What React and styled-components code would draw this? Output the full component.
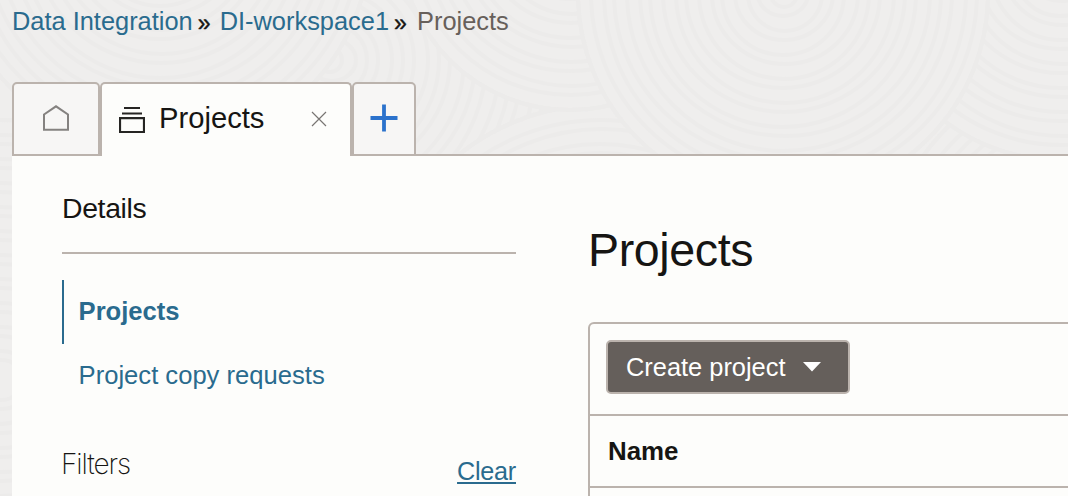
import React from "react";
import styled, { createGlobalStyle } from "styled-components";

const line = "#bbb3ad";
const link = "#2a6b8e";
const ink = "#161513";

const GlobalStyle = createGlobalStyle`
  * { box-sizing: border-box; }
  body {
    margin: 0;
    overflow: hidden;
    background: #efeeed;
    color: ${ink};
    font-family: "Liberation Sans", Arial, sans-serif;
  }
`;

const Page = styled.div`
  position: relative;
  isolation: isolate;
  width: 100vw;
  height: 100vh;
  overflow: hidden;
  display: flex;
  flex-direction: column;
  padding-left: 12px;
`;

const Pattern = styled.svg`
  position: absolute;
  inset: 0;
  z-index: -1;
  width: 1068px;
  height: 496px;
`;

const Breadcrumb = styled.nav`
  display: flex;
  flex: none;
  height: 82px;
  padding-top: 1px;
  font-size: 25.4px;
  line-height: 40px;
`;

const Crumb = styled.a`
  color: ${link};
  text-decoration: none;
  white-space: nowrap;
`;

const CurrentCrumb = styled.span`
  margin-left: 1px;
  color: #67605b;
`;

const Separator = styled.span`
  width: 27px;
  padding-left: 5px;
  font-size: 23px;
  line-height: 44px;
  color: ${ink};
  -webkit-text-stroke: 0.4px ${ink};
`;

const TabBar = styled.div`
  display: flex;
  flex: none;
  height: 74px;
`;

const Tab = styled.div`
  display: flex;
  align-items: center;
  justify-content: ${(p) => (p.$active ? "flex-start" : "center")};
  width: ${(p) => p.$width}px;
  padding-left: ${(p) => (p.$active ? "17px" : 0)};
  padding-bottom: 2px;
  border: 2px solid ${line};
  border-bottom-width: ${(p) => (p.$active ? 0 : "2px")};
  border-radius: 5px 5px 0 0;
  background: ${(p) => (p.$active ? "#fdfdfb" : "#f7f6f5")};
`;

const TabRule = styled.div`
  flex: 1;
  border-bottom: 2px solid ${line};
`;

const TabLabel = styled.span`
  width: 152px;
  margin-left: 14px;
  padding-bottom: 2px;
  font-size: 29.2px;
  line-height: 40px;
`;

const Icon = styled.svg`
  display: block;
  flex: none;
  fill: none;
`;

const Panel = styled.main`
  display: flex;
  flex: 1;
  min-height: 0;
  padding-left: 50px;
  background: #fdfdfb;
`;

const Sidebar = styled.aside`
  flex: none;
  width: 454px;
  margin-right: 72px;
`;

const Details = styled.h2`
  margin: 0 0 26px;
  height: 98px;
  padding-top: 32px;
  border-bottom: 2px solid ${line};
  font-size: 28.4px;
  font-weight: 400;
  letter-spacing: -0.35px;
  line-height: 40px;
`;

const NavItem = styled.a`
  display: block;
  height: 64px;
  padding-left: 14.6px;
  border-left: 2px solid ${(p) => (p.$selected ? link : "transparent")};
  color: ${link};
  font-size: 25.6px;
  font-weight: ${(p) => (p.$selected ? 700 : 400)};
  line-height: 63px;
`;

const FilterBar = styled.div`
  display: flex;
  justify-content: space-between;
  margin-top: 36px;
`;

const FilterTitle = styled.h3`
  margin: 0 0 0 -1px;
  font-family: Inter, "Liberation Sans", sans-serif;
  font-size: 28px;
  font-weight: 200;
  letter-spacing: -1.1px;
  line-height: 40px;
`;

const Clear = styled.a`
  margin-top: 7px;
  color: ${link};
  font-size: 25.2px;
  letter-spacing: -0.25px;
  line-height: 40px;
  text-decoration: underline;
  text-decoration-thickness: 2px;
  text-underline-offset: 2px;
`;

const Content = styled.section`
  flex: 1;
  min-width: 0;
`;

const Title = styled.h1`
  margin: 0;
  height: 166px;
  padding-top: 64px;
  font-size: 46.6px;
  font-weight: 400;
  letter-spacing: -0.4px;
  line-height: 60px;
`;

const Table = styled.div`
  height: 300px;
  margin-right: -10px;
  border: 2px solid ${line};
  border-radius: 6px;
`;

const Toolbar = styled.div`
  height: 92px;
  padding: 16px;
  border-bottom: 2px solid ${line};
`;

const CreateButton = styled.button`
  display: flex;
  align-items: center;
  width: 244px;
  height: 54px;
  padding: 0 0 0 18px;
  border: 2px solid ${line};
  border-radius: 5px;
  background: #655f5b;
  color: #fff;
  font: 25.4px/50px "Liberation Sans", Arial, sans-serif;
`;

const ButtonLabel = styled.span`
  width: 177px;
  text-align: left;
`;

const HeaderCell = styled.div`
  height: 72px;
  padding-left: 18px;
  border-bottom: 2px solid ${line};
  font-size: 25.9px;
  font-weight: 700;
  line-height: 70px;
`;

const medallions = [
  { x: 330, y: 60, r: 300 },
  { x: 0, y: 380, r: 260 },
  { x: 160, y: -60, r: 210 },
  { x: 600, y: 330, r: 225 },
  { x: 1110, y: 290, r: 230 },
  { x: 1060, y: -30, r: 190 },
  { x: 570, y: -60, r: 170 },
  { x: 783, y: -6, r: 205 },
];

function BackgroundPattern() {
  return (
    <Pattern viewBox="0 0 1068 496" aria-hidden="true">
      {medallions.map((m) => (
        <g key={`${m.x}-${m.y}`} stroke="#ecebea" strokeWidth="4">
          <circle cx={m.x} cy={m.y} r={m.r} fill="#efeeed" />
          {Array.from({ length: Math.floor(m.r / 12) }, (_, i) => (
            <ellipse
              key={i}
              cx={m.x + (i % 3)}
              cy={m.y}
              rx={m.r - 12 * i}
              ry={Math.max(2, m.r - 12 * i - (i % 2) * 3)}
              fill="none"
            />
          ))}
        </g>
      ))}
    </Pattern>
  );
}

export default function App() {
  return (
    <>
      <GlobalStyle />
      <Page>
        <BackgroundPattern />
        <Breadcrumb>
          <Crumb>Data Integration</Crumb>
          <Separator>»</Separator>
          <Crumb>DI-workspace1</Crumb>
          <Separator>»</Separator>
          <CurrentCrumb>Projects</CurrentCrumb>
        </Breadcrumb>
        <TabBar>
          <Tab $width={88}>
            <Icon width="26" height="26" viewBox="0 0 26 26">
              <path d="M1 9.5 13 1.3 25 9.5V24.8H1Z" stroke="#858280" strokeWidth="2" />
            </Icon>
          </Tab>
          <Tab $width={252} $active>
            <Icon width="26" height="28" viewBox="0 0 26 28">
              <path d="M5 3H21M3 8.5H23" stroke="#262523" strokeWidth="2.2" />
              <path d="M1 13.2H25V27H1Z" stroke="#262523" strokeWidth="2.2" />
            </Icon>
            <TabLabel>Projects</TabLabel>
            <Icon width="16" height="16" viewBox="0 0 16 16">
              <path d="M1 1 15 15M15 1 1 15" stroke="#787573" strokeWidth="1.2" />
            </Icon>
          </Tab>
          <Tab $width={64}>
            <Icon width="28" height="28" viewBox="0 0 28 28">
              <path d="M14 .5V27.5M.5 14H27.5" stroke="#2b72cc" strokeWidth="3.8" />
            </Icon>
          </Tab>
          <TabRule />
        </TabBar>
        <Panel>
          <Sidebar>
            <Details>Details</Details>
            <NavItem $selected>Projects</NavItem>
            <NavItem>Project copy requests</NavItem>
            <FilterBar>
              <FilterTitle>Filters</FilterTitle>
              <Clear>Clear</Clear>
            </FilterBar>
          </Sidebar>
          <Content>
            <Title>Projects</Title>
            <Table>
              <Toolbar>
                <CreateButton>
                  <ButtonLabel>Create project</ButtonLabel>
                  <Icon width="18" height="10" viewBox="0 0 18 10">
                    <path d="M0 0H18L9 9.5Z" fill="#fff" />
                  </Icon>
                </CreateButton>
              </Toolbar>
              <HeaderCell>Name</HeaderCell>
            </Table>
          </Content>
        </Panel>
      </Page>
    </>
  );
}
